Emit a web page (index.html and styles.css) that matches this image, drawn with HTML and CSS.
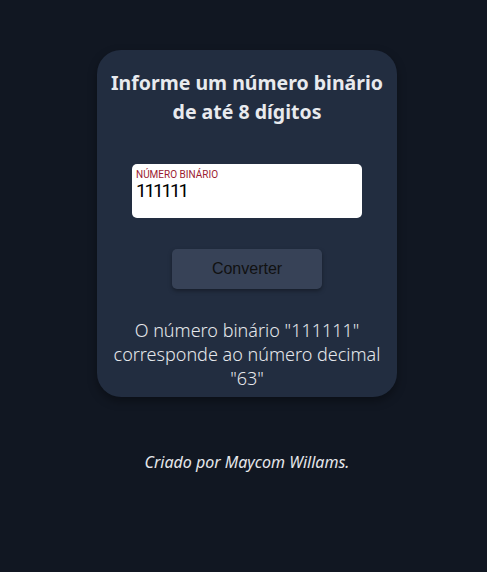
FILE: index.html
```html
<!DOCTYPE html>
<html lang="pt-BR">
<head>
<meta charset="utf-8">
<title>Conversor binário</title>
<link rel="stylesheet" href="styles.css">
</head>
<body>
<main class="page">
  <section class="card">
    <h1 class="title">Informe um número binário de até 8 dígitos</h1>
    <label class="field">
      <span class="field-label">Número binário</span>
      <span class="field-value">111111</span>
    </label>
    <button class="btn" type="button">Converter</button>
    <p class="result">O número binário "111111" corresponde ao número decimal "63"</p>
  </section>
  <footer class="footer">Criado por Maycom Willams.</footer>
</main>
</body>
</html>
```
FILE: styles.css
```css
html, body {
  margin: 0;
  padding: 0;
  background: #111722;
  height: 100%;
}
body {
  font-family: "Noto Sans", "Open Sans", sans-serif;
  color: #e5e7eb;
}
.page {
  display: flex;
  flex-direction: column;
  align-items: center;
  padding: 50px 0 0 7px;
}
.card {
  width: 300px;
  box-sizing: border-box;
  background: #222d40;
  border-radius: 24px;
  padding: 18px 8px 7px;
  display: flex;
  flex-direction: column;
  align-items: center;
  box-shadow: 0 4px 10px rgba(0,0,0,0.35);
}
.title {
  margin: 0;
  font-size: 19.5px;
  line-height: 29px;
  font-weight: 700;
  text-align: center;
  color: #e8eaee;
}
.field {
  margin-top: 38px;
  width: 230px;
  height: 54px;
  box-sizing: border-box;
  background: #ffffff;
  border-radius: 5px;
  padding: 5px 4px;
  display: flex;
  flex-direction: column;
  font-family: Roboto, "Liberation Sans", sans-serif;
}
.field-label {
  font-size: 10px;
  line-height: 12px;
  text-transform: uppercase;
  color: #9b1b30;
}
.field-value {
  font-size: 19px;
  line-height: 20px;
  letter-spacing: -2.2px;
  color: #000;
}
.btn {
  margin-top: 31px;
  width: 150px;
  height: 40px;
  border: none;
  border-radius: 5px;
  background: #374257;
  color: #111;
  font-family: "Liberation Sans", Arial, sans-serif;
  font-size: 16px;
  box-shadow: 0 2px 4px rgba(0,0,0,0.35);
}
.result {
  margin: 29px 0 0;
  font-size: 18px;
  line-height: 24px;
  font-weight: 300;
  text-align: center;
  color: #e5e7eb;
}
.footer {
  margin-top: 55px;
  font-size: 16px;
  line-height: 20px;
  font-style: italic;
  color: #e5e7eb;
}
```
